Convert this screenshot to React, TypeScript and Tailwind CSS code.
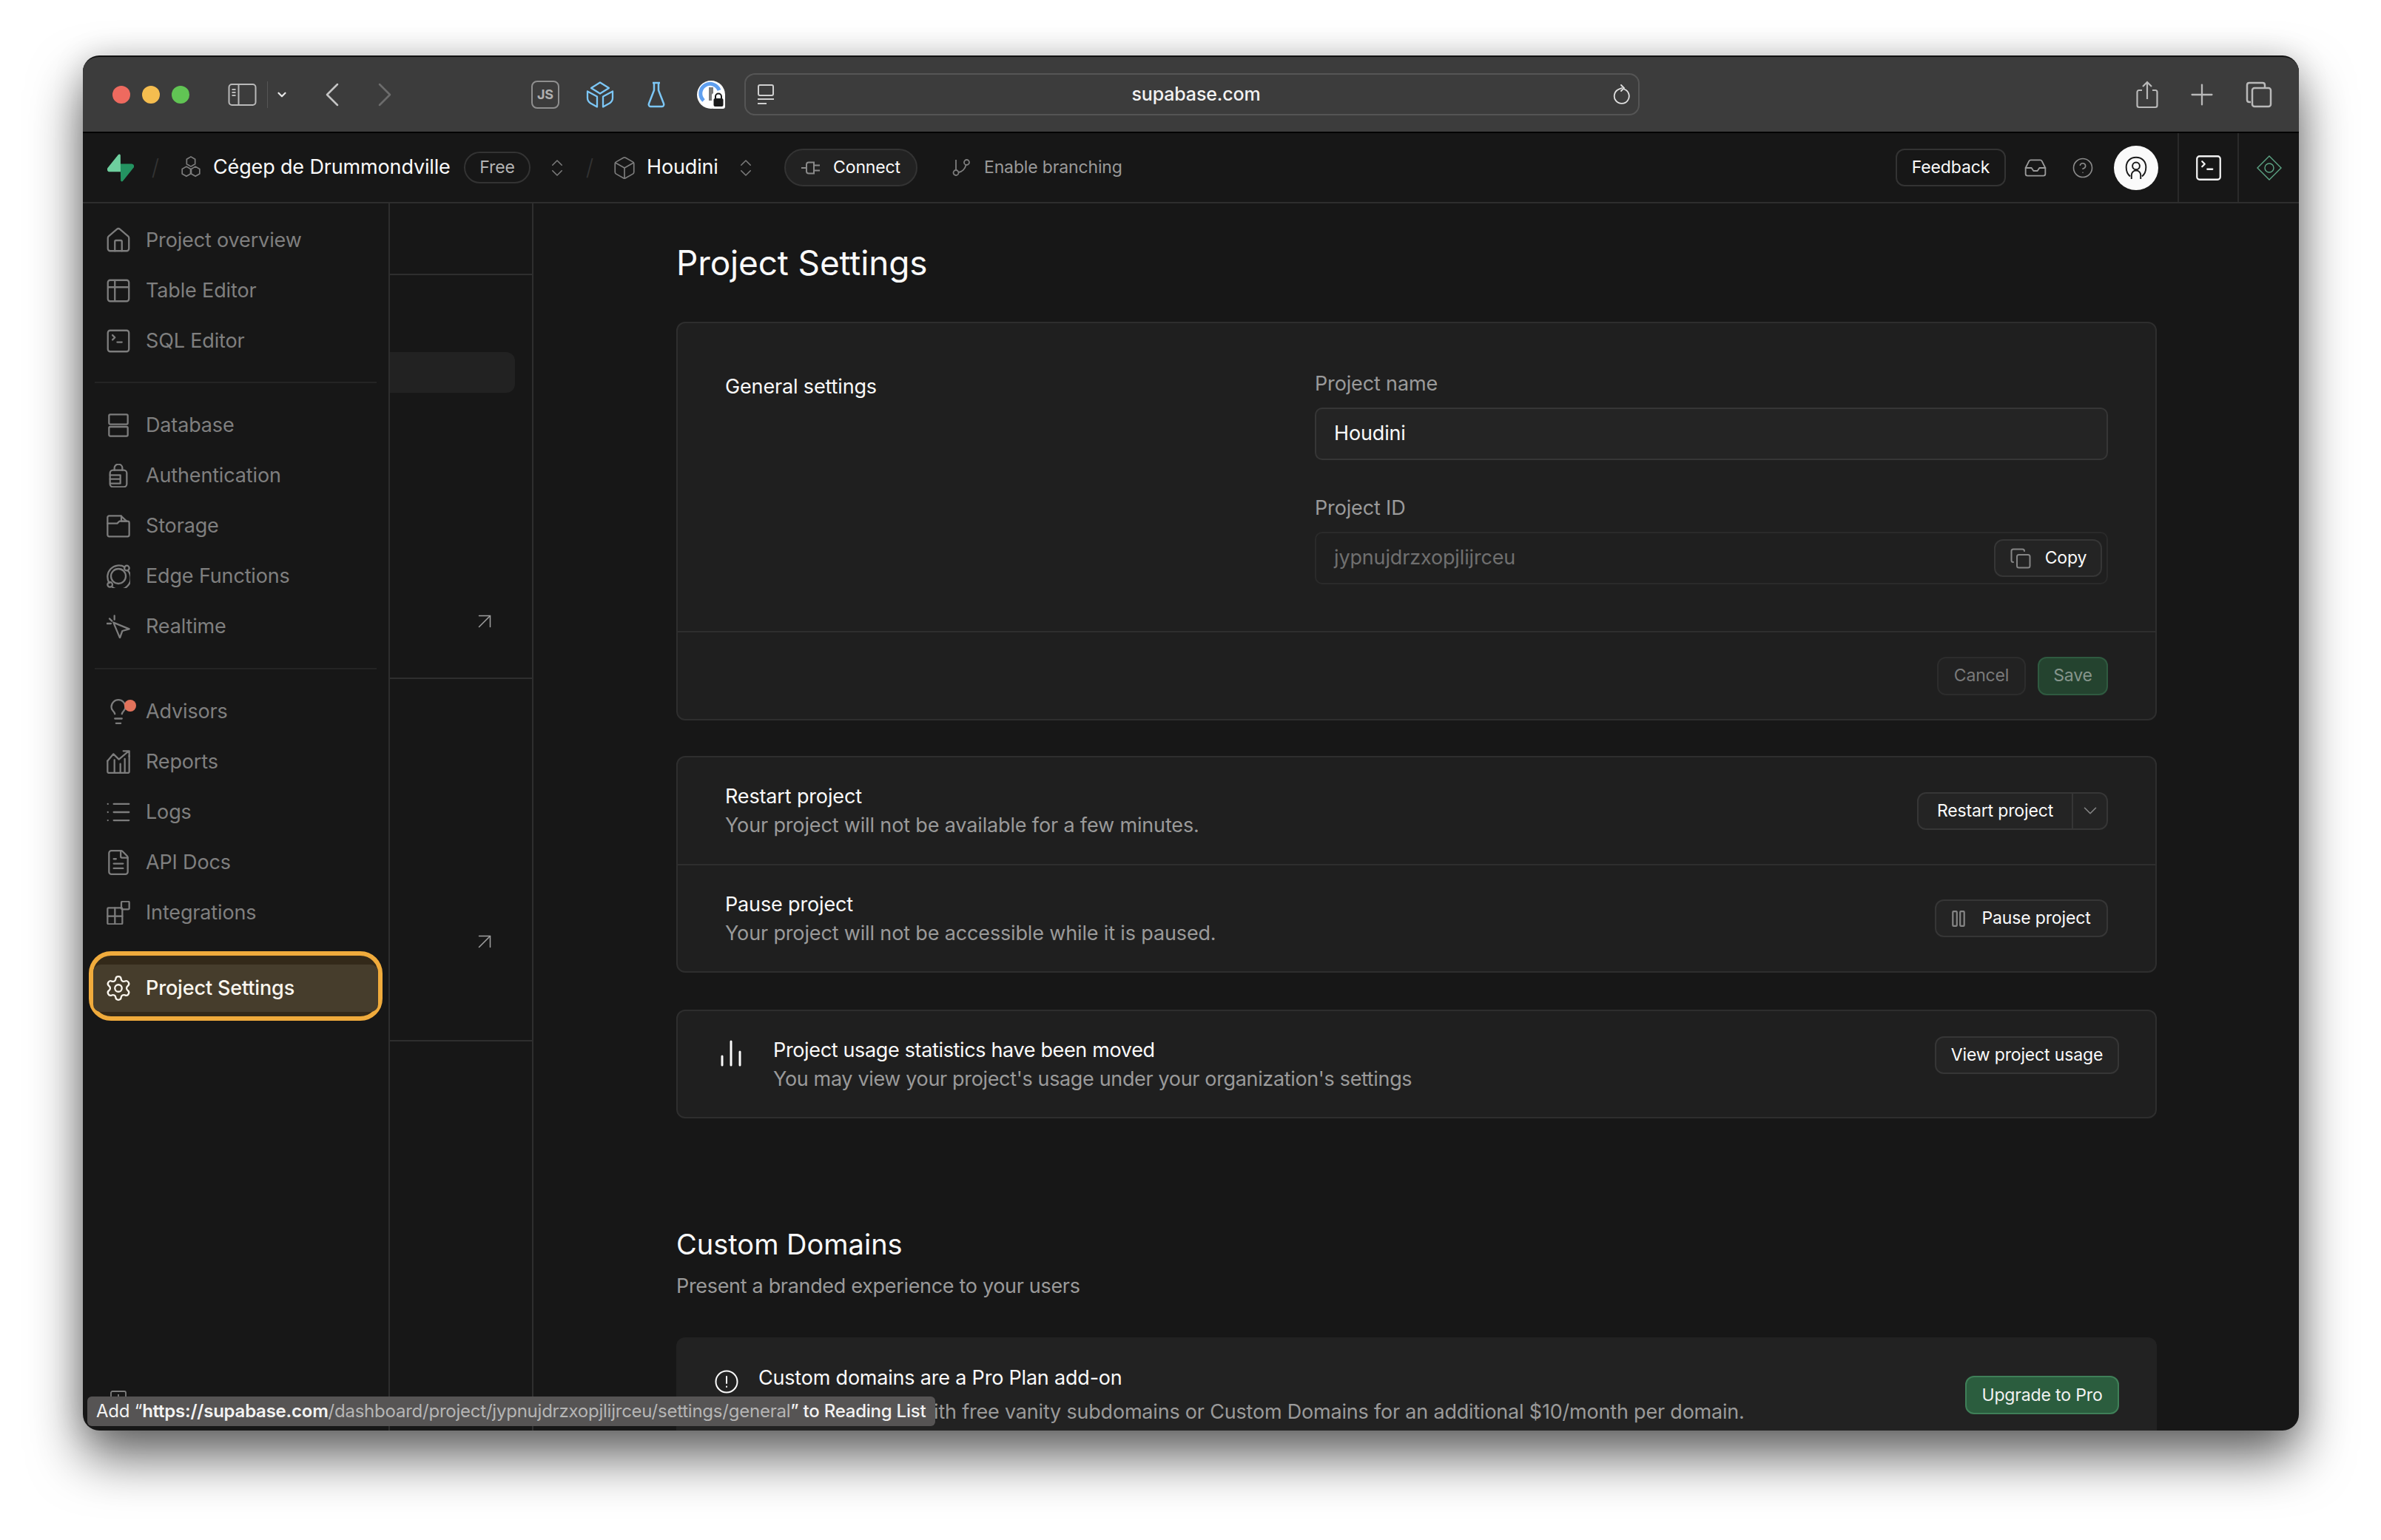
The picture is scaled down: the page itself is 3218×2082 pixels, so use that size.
import React from "react";
import {
  ArrowUpRight,
  Box,
  ChevronDown,
  ChevronLeft,
  ChevronRight,
  ChevronsUpDown,
  Copy,
  FileText,
  HelpCircle,
  Home,
  Inbox,
  Lightbulb,
  List,
  Plus,
  Settings,
  SquareTerminal,
  Table2,
} from "lucide-react";

const navIcon = "size-[32px] shrink-0 text-[#7d7d7d]";
// lucide icons have padding in their viewBox, so they need a bigger box
const lucideNav = "mx-[-3px] size-[38px] shrink-0 text-[#7d7d7d]";

function Glyph({ children, className = navIcon }: any) {
  return (
    <svg
      viewBox="0 0 24 24"
      fill="none"
      stroke="currentColor"
      strokeWidth="1.7"
      strokeLinecap="round"
      strokeLinejoin="round"
      className={className}
    >
      {children}
    </svg>
  );
}

const DatabaseIcon = () => (
  <Glyph>
    <rect x="2.5" y="1" width="19" height="10" rx="1.2" />
    <rect x="2.5" y="13.5" width="19" height="9.5" rx="1.2" />
  </Glyph>
);
const AuthIcon = () => (
  <Glyph>
    <path d="M8 6.500V4a4 3.500 0 0 1 8 0v2.500" />
    <rect x="3.500" y="6.500" width="17" height="17" rx="3" />
    <path d="M3.500 11.500h10.500v8.500H4M3.500 15.500h10.500" />
  </Glyph>
);
const StorageIcon = () => (
  <Glyph>
    <path d="M1 9.500V3.500c0-.9.7-1.700 1.700-1.700h11.800l6 5.500" />
    <path d="M15 2v5.300h5.500" />
    <path d="M1 9.500h9.800l2.200-2.200h8.300c.9 0 1.700.8 1.700 1.700v12c0 1-.8 1.700-1.700 1.700H2.700c-1 0-1.700-.7-1.700-1.700z" />
  </Glyph>
);
const EdgeIcon = () => (
  <Glyph>
    <path d="M18.500 2.800A11.500 11.500 0 0 0 2.800 18.800" />
    <path d="M21.300 6a11.500 11.500 0 0 1-16 16.500" />
    <circle cx="12" cy="12" r="7.500" />
    <circle cx="20.500" cy="3.800" r="2.500" />
    <circle cx="3.500" cy="20.500" r="2.500" />
  </Glyph>
);
const RealtimeIcon = () => (
  <Glyph>
    <path d="M7 8l16 6.500-7 2-2.500 7z" />
    <path d="M5.500 6.500L3 4M8 5V1M4.500 9H.5" />
  </Glyph>
);
const ReportsIcon = () => (
  <Glyph>
    <path d="M1 11l6-7 5.500 5.500 9.500-8M17 1h6v5.500" />
    <path d="M1 11v11c0 .6.500 1.200 1.200 1.200h19.600c.6 0 1.200-.6 1.200-1.200V6" />
    <path d="M8 23V10M14 23V14M18.500 23V9" />
  </Glyph>
);
const IntegrationsIcon = () => (
  <Glyph>
    <rect x="1" y="7" width="15" height="16.500" rx="1" />
    <path d="M1 15.500h15M8.500 7v16.500" />
    <rect x="15" y=".5" width="8" height="8" rx="1.200" />
  </Glyph>
);

function AdvisorsIcon() {
  return (
    <span className="relative size-[32px] shrink-0">
      <Lightbulb className="mx-[-3px] size-[38px] mt-[-3px] text-[#7d7d7d]" strokeWidth={1.45} />
      <span className="absolute right-[-8px] top-0 size-[16px] rounded-full bg-[#e2725b]" />
    </span>
  );
}

function NavItem({ icon, label }: any) {
  return (
    <div className="flex h-[68px] items-center gap-[21px] pl-[32px] text-[27px] text-[#7f7f7f]">
      {icon}
      <span>{label}</span>
    </div>
  );
}

function Divider({ className = "" }: any) {
  return <div className={`mx-[16px] h-[2px] shrink-0 bg-[#242424] ${className}`} />;
}

function Sidebar() {
  return (
    <aside className="flex w-[415px] shrink-0 flex-col border-r-2 border-[#2e2e2e] pt-[16px]">
      <NavItem icon={<Home className={lucideNav} strokeWidth={1.45} />} label="Project overview" />
      <NavItem icon={<Table2 className={lucideNav} strokeWidth={1.45} />} label="Table Editor" />
      <NavItem icon={<SquareTerminal className={lucideNav} strokeWidth={1.45} />} label="SQL Editor" />
      <Divider className="mb-[23px] mt-[21px]" />
      <NavItem icon={<DatabaseIcon />} label="Database" />
      <NavItem icon={<AuthIcon />} label="Authentication" />
      <NavItem icon={<StorageIcon />} label="Storage" />
      <NavItem icon={<EdgeIcon />} label="Edge Functions" />
      <NavItem icon={<RealtimeIcon />} label="Realtime" />
      <Divider className="mb-[23px] mt-[22px]" />
      <NavItem icon={<AdvisorsIcon />} label="Advisors" />
      <NavItem icon={<ReportsIcon />} label="Reports" />
      <NavItem icon={<List className={lucideNav} strokeWidth={1.45} />} label="Logs" />
      <NavItem icon={<FileText className={lucideNav} strokeWidth={1.45} />} label="API Docs" />
      <NavItem icon={<IntegrationsIcon />} label="Integrations" />
      <div className="ml-[8px] mt-[18px] flex h-[94px] w-[397px] shrink-0 items-center rounded-[30px] border-[6px] border-[#f0ab3c] bg-[#332919] pt-[6px]">
        <div className="flex h-[64px] w-full items-center gap-[21px] rounded-[10px] bg-[#463d2c] pl-[18px] text-[27px] font-medium text-[#faf6ee]">
          <Settings className="mx-[-3px] size-[38px] shrink-0" strokeWidth={1.45} />
          <span>Project Settings</span>
        </div>
      </div>
      <svg viewBox="0 0 22 32" className="ml-[37px] mb-[22px] mt-auto h-[32px] w-[22px] text-[#7d7d7d]" fill="none" stroke="currentColor" strokeWidth="1.800">
        <rect x="1" y="1" width="20" height="30" rx="2" />
        <path d="M11 5v6" />
      </svg>
    </aside>
  );
}

function SubPanel() {
  const arrow = "ml-auto mr-[46px] size-[36px] text-[#a0a0a0]";
  return (
    <div className="flex w-[194px] shrink-0 flex-col border-r-2 border-[#2e2e2e]">
      <div className="h-[97px] shrink-0 border-b-2 border-[#2e2e2e]" />
      <div className="h-[546px] shrink-0 border-b-2 border-[#2e2e2e] pt-[104px]">
        <div className="mr-[23px] h-[55px] rounded-r-[12px] bg-[#222222]" />
        <div className="mt-[291px] flex">
          <ArrowUpRight className={arrow} strokeWidth={1} />
        </div>
      </div>
      <div className="h-[490px] shrink-0 border-b-2 border-[#2e2e2e] pt-[337px]">
        <div className="flex">
          <ArrowUpRight className={arrow} strokeWidth={1} />
        </div>
      </div>
    </div>
  );
}

function OutlineButton({ children, className = "" }: any) {
  return (
    <div
      className={`flex h-[51px] items-center justify-center rounded-[12px] border-2 border-[#363636] bg-[#242424] text-[23px] text-[#fafafa] ${className}`}
    >
      {children}
    </div>
  );
}

function GeneralCard() {
  return (
    <section className="rounded-[12px] border-2 border-[#2e2e2e] bg-[#1f1f1f]">
      <div className="flex h-[416px] pl-[64px] pr-[64px] pt-[64px]">
        <div className="w-[797px] pt-[4px] text-[27px] leading-[36px] text-[#fafafa]">General settings</div>
        <div className="flex-1">
          <div className="text-[27px] leading-[36px] text-[#9a9a9a]">Project name</div>
          <div className="mt-[14px] flex h-[71px] items-center rounded-[10px] border-2 border-[#363636] bg-[#242424] pl-[24px] text-[27px] text-[#fafafa]">
            Houdini
          </div>
          <div className="mt-[47px] text-[27px] leading-[36px] text-[#9a9a9a]">Project ID</div>
          <div className="mt-[14px] flex h-[71px] items-center justify-between rounded-[10px] border-2 border-[#2a2a2a] bg-[#1f1f1f] pl-[24px] pr-[6px] text-[27px] text-[#6f6f6f]">
            <span>jypnujdrzxopjlijrceu</span>
            <OutlineButton className="w-[146px] gap-[18px]">
              <Copy className="size-[30px] text-[#858585]" strokeWidth={1.6} />
              Copy
            </OutlineButton>
          </div>
        </div>
      </div>
      <div className="flex h-[119px] items-center justify-end gap-[16px] border-t-2 border-[#2e2e2e] pr-[64px]">
        <div className="flex h-[52px] w-[120px] items-center justify-center rounded-[12px] border-2 border-[#2c2c2c] bg-[#222222] text-[23px] text-[#7a7a7a]">
          Cancel
        </div>
        <div className="flex h-[52px] w-[95px] items-center justify-center rounded-[12px] border-2 border-[#2f5a40] bg-[#24432f] text-[23px] text-[#86958c]">
          Save
        </div>
      </div>
    </section>
  );
}

function ActionRow({ title, desc, children, className = "" }: any) {
  return (
    <div className={`flex items-center justify-between pl-[64px] pr-[64px] ${className}`}>
      <div className="text-[27px] leading-[39px]">
        <div className="text-[#fafafa]">{title}</div>
        <div className="text-[#9a9a9a]">{desc}</div>
      </div>
      {children}
    </div>
  );
}

function ProjectActions() {
  return (
    <section className="mt-[48px] rounded-[12px] border-2 border-[#2e2e2e] bg-[#1f1f1f]">
      <ActionRow title="Restart project" desc="Your project will not be available for a few minutes." className="h-[144px]">
        <div className="flex h-[51px] w-[258px] rounded-[12px] border-2 border-[#363636] bg-[#242424] text-[23px] text-[#fafafa]">
          <div className="flex flex-1 items-center justify-center border-r-2 border-[#363636]">Restart project</div>
          <div className="flex w-[45px] items-center justify-center">
            <ChevronDown className="size-[30px] text-[#858585]" strokeWidth={1.3} />
          </div>
        </div>
      </ActionRow>
      <ActionRow
        title="Pause project"
        desc="Your project will not be accessible while it is paused."
        className="h-[145px] border-t-2 border-[#2e2e2e]"
      >
        <OutlineButton className="w-[234px] gap-[22px]">
          <svg viewBox="0 0 16 20" className="h-[22px] w-[18px] text-[#858585]" fill="none" stroke="currentColor" strokeWidth="2">
            <rect x="1" y="1" width="5" height="18" rx="1" />
            <rect x="10" y="1" width="5" height="18" rx="1" />
          </svg>
          Pause project
        </OutlineButton>
      </ActionRow>
    </section>
  );
}

function UsageCard() {
  return (
    <section className="mt-[50px] flex h-[147px] items-center rounded-[12px] border-2 border-[#2e2e2e] bg-[#1f1f1f] pl-[58px] pr-[49px]">
      <svg viewBox="0 0 28 36" className="mb-[30px] h-[36px] w-[28px] shrink-0 text-[#fafafa]" fill="none" stroke="currentColor" strokeWidth="3" strokeLinecap="round">
        <path d="M2 34V22M14 34V2M26 34V16" />
      </svg>
      <div className="ml-[43px] text-[27px] leading-[39px] tracking-[-0.35px]">
        <div className="text-[#fafafa]">Project usage statistics have been moved</div>
        <div className="text-[#9a9a9a]">You may view your project's usage under your organization's settings</div>
      </div>
      <OutlineButton className="mt-[34px] ml-auto w-[249px] self-start">View project usage</OutlineButton>
    </section>
  );
}

function CustomDomains() {
  return (
    <div>
      <h2 className="mt-[142px] text-[38px] leading-[56px] tracking-normal text-[#fafafa]">Custom Domains</h2>
      <p className="mt-[11px] text-[27px] leading-[36px] tracking-[-0.32px] text-[#9a9a9a]">Present a branded experience to your users</p>
      <section className="mt-[51px] flex h-[200px] justify-between rounded-[12px] bg-[#222222] pl-[52px] pr-[51px] pt-[32px]">
        <div className="flex">
          <svg viewBox="0 0 32 32" className="mt-[12px] size-[32px] shrink-0 text-[#fafafa]" fill="none" stroke="currentColor" strokeWidth="2" strokeLinecap="round">
            <circle cx="16" cy="16" r="14.500" />
            <path d="M16 9v9M16 22.500v.5" />
          </svg>
          <div className="ml-[27px] text-[27px] leading-[46px] tracking-[-0.2px]">
            <div className="text-[#fafafa]">Custom domains are a Pro Plan add-on</div>
            <div className="text-[#9a9a9a]">Paid Plans come with free vanity subdomains or Custom Domains for an additional $10/month per domain.</div>
          </div>
        </div>
        <div className="mt-[20px] flex h-[52px] w-[208px] items-center justify-center rounded-[12px] border-2 border-[#3f7f58] bg-[#2b5d3e] text-[23px] text-[#f2f2f2]">
          Upgrade to Pro
        </div>
      </section>
    </div>
  );
}

function SafariBar() {
  const ctrl = "shrink-0 text-[#b9b9b9]";
  return (
    <div className="flex h-[103px] shrink-0 items-center border-b-2 border-black bg-[#3c3c3c] pl-[40px]">
      <span className="size-[24px] shrink-0 rounded-full bg-[#ee6a5f]" />
      <span className="ml-[16px] size-[24px] shrink-0 rounded-full bg-[#f5bd4f]" />
      <span className="ml-[16px] size-[24px] shrink-0 rounded-full bg-[#61c454]" />
      <svg viewBox="0 0 38 30" className={`ml-[52px] h-[30px] w-[39px] ${ctrl}`} fill="none" stroke="currentColor" strokeWidth="2">
        <rect x="1" y="1" width="36" height="28" rx="4" />
        <path d="M14 1v28M5 8h5M5 12h5M5 16h5" />
      </svg>
      <span className="ml-[14px] h-[36px] w-px shrink-0 bg-[#555555]" />
      <ChevronDown className="ml-[10px] size-[18px] shrink-0 text-[#e6e6e6]" strokeWidth={3} />
      <ChevronLeft className="ml-[31px] size-[56px] shrink-0 text-[#c4c4c4]" strokeWidth={1.1} />
      <ChevronRight className="ml-[15px] size-[56px] shrink-0 text-[#6c6c6c]" strokeWidth={1.1} />
      <div className="ml-[170px] flex size-[38px] shrink-0 items-center justify-center rounded-[8px] border-2 border-[#8f8f8f] text-[18px] font-bold text-[#b0b0b0]">
        JS
      </div>
      <svg viewBox="0 0 38 38" className="ml-[36px] size-[38px] shrink-0 text-[#7cc6f5]" fill="none" stroke="currentColor" strokeWidth="2.300" strokeLinejoin="round">
        <path d="M19 2.500l12 7.500-12 7.500-12-7.500z" />
        <path d="M2 14.500l13 7v14l-9-5q-4-3-4-7z" />
        <path d="M36 14.500l-13 7v14l9-5q4-3 4-7z" />
      </svg>
      <svg viewBox="0 0 26 36" className="ml-[44px] h-[36px] w-[26px] shrink-0 text-[#7cc6f5]" fill="none" stroke="currentColor" strokeWidth="2.500" strokeLinejoin="round">
        <path d="M8 2h10M10 2v10L3 30c-.8 2 .5 4 2 4h16c1.500 0 2.800-2 2-4l-7-18V2" />
      </svg>
      <svg viewBox="0 0 38 38" className="ml-[42px] size-[38px] shrink-0">
        <circle cx="19" cy="19" r="19" fill="#ffffff" />
        <path d="M9 27A13 13 0 1 1 30 13" fill="none" stroke="#5f9fef" strokeWidth="5" />
        <rect x="16" y="9" width="6" height="18" fill="#7a7a7a" />
        <rect x="20" y="17" width="18" height="21" rx="3" fill="#ffffff" />
        <path d="M25 24v-2.500a4 4 0 0 1 8 0V24" fill="none" stroke="#1a1a1a" strokeWidth="2" />
        <rect x="22.500" y="24" width="13" height="11" rx="2" fill="#1a1a1a" />
      </svg>
      <div className="ml-[26px] flex h-[57px] w-[1210px] shrink-0 items-center rounded-[14px] border-2 border-[#555555] pl-[15px] pr-[10px]">
        <svg viewBox="0 0 24 28" className="h-[28px] w-[24px] text-[#cfcfcf]" fill="none" stroke="currentColor" strokeWidth="2">
          <rect x="2" y="1" width="20" height="14" rx="2" />
          <path d="M1 20h22M1 26h12" />
        </svg>
        <span className="flex-1 pl-[6px] text-center text-[25px] font-medium text-[#f2f2f2]">supabase.com</span>
        <svg viewBox="0 0 24 28" className="h-[28px] w-[24px] text-[#e0e0e0]" fill="none" stroke="currentColor" strokeWidth="1.800" strokeLinecap="round">
          <path d="M15 6.500a10 10 0 1 1-7 .2L12 5" />
          <path d="M11 1l4 4-4 4" />
        </svg>
      </div>
      <svg viewBox="0 0 30 38" className={`ml-[671px] h-[38px] w-[30px] ${ctrl}`} fill="none" stroke="currentColor" strokeWidth="2.200">
        <path d="M8 13H4c-1.500 0-2.500 1-2.500 2.500v18c0 1.500 1 2.500 2.500 2.500h22c1.500 0 2.500-1 2.500-2.500v-18c0-1.500-1-2.500-2.500-2.500h-4M15 25V2M9 8l6-6 6 6" />
      </svg>
      <Plus className={`ml-[36px] size-[46px] ${ctrl}`} strokeWidth={1.2} />
      <svg viewBox="0 0 36 36" className={`ml-[36px] size-[36px] ${ctrl}`} fill="none" stroke="currentColor" strokeWidth="2.500">
        <path d="M7 28H5c-2 0-3-1-3-3V5c0-2 1-3 3-3h18c2 0 3 1 3 3v3" />
        <rect x="9" y="9" width="25" height="25" rx="3" />
      </svg>
    </div>
  );
}

function AppHeader() {
  const updown = "size-[30px] shrink-0 text-[#7d7d7d]";
  const slash = <span className="block w-[12px] text-center text-[30px] font-light text-[#333333]">/</span>;
  return (
    <header className="flex h-[95px] shrink-0 items-center border-b-2 border-[#2e2e2e] bg-[#171717] pl-[33px]">
      <svg viewBox="0 0 109 113" className="h-[38px] w-[36px] shrink-0">
        <path d="M63.700 110.300c-2.900 3.600-8.700 1.600-8.800-3l-1-67.300h45.800c8.300 0 12.900 9.600 7.700 16z" fill="#249361" />
        <path d="M45.300 2.100c2.900-3.600 8.700-1.600 8.800 3l.4 67.300H9.200c-8.300 0-12.900-9.600-7.700-16z" fill="#6ecf9e" />
      </svg>
      <span className="ml-[23px]">{slash}</span>
      <svg viewBox="0 0 27 36" className="ml-[29px] h-[34px] w-[26px] shrink-0 text-[#7d7d7d]" fill="none" stroke="currentColor" strokeWidth="1.800" strokeLinejoin="round">
        <path d="M13.500 2l6 3.500v7l-6 3.500-6-3.500v-7zM7 16l6 3.500v7L7 30l-6-3.500v-7zM20 16l6 3.500v7L20 30l-6-3.500v-7z" />
      </svg>
      <span className="ml-[17px] w-[322px] shrink-0 whitespace-nowrap text-[27px] text-[#fafafa]">Cégep de Drummondville</span>
      <div className="ml-[17px] flex h-[43px] w-[90px] shrink-0 items-center justify-center rounded-full border-2 border-[#333333] text-[23px] text-[#b3b3b3]">
        Free
      </div>
      <ChevronsUpDown className={`ml-[21px] ${updown}`} strokeWidth={1.2} />
      <span className="ml-[23px]">{slash}</span>
      <Box className="ml-[24px] size-[34px] shrink-0 text-[#7d7d7d]" strokeWidth={1.2} />
      <span className="ml-[13px] w-[97px] shrink-0 text-[27px] text-[#fafafa]">Houdini</span>
      <ChevronsUpDown className={`ml-[22px] ${updown}`} strokeWidth={1.2} />
      <div className="ml-[37px] flex h-[51px] w-[180px] shrink-0 items-center justify-center gap-[17px] rounded-full border-2 border-[#333333] bg-[#222222] text-[23px] text-[#fafafa]">
        <svg viewBox="0 0 26 18" className="h-[18px] w-[26px] text-[#8a8a8a]" fill="none" stroke="currentColor" strokeWidth="2">
          <path d="M0 9h7M17 1.500h-7a3 3 0 0 0-3 3v9a3 3 0 0 0 3 3h7zM17 5.500h8M17 12.500h8" />
        </svg>
        Connect
      </div>
      <svg viewBox="0 0 24 23" className="ml-[47px] h-[23px] w-[24px] shrink-0 text-[#7d7d7d]" fill="none" stroke="currentColor" strokeWidth="1.800">
        <path d="M5 1v13.500" />
        <circle cx="5" cy="18.500" r="3.500" />
        <circle cx="19.500" cy="4.500" r="3.500" />
        <path d="M18.500 8c-1 5-5 9-10 10" />
      </svg>
      <span className="ml-[19px] whitespace-nowrap text-[23px] text-[#9a9a9a]">Enable branching</span>
      <div className="ml-auto flex h-[51px] w-[149px] shrink-0 items-center justify-center rounded-[12px] border-2 border-[#333333] text-[23px] text-[#fafafa]">
        Feedback
      </div>
      <Inbox className="ml-[24px] size-[32px] shrink-0 text-[#9a9a9a]" strokeWidth={1.4} />
      <HelpCircle className="ml-[33px] size-[30px] shrink-0 text-[#8a8a8a]" strokeWidth={1.3} />
      <div className="ml-[27px] flex size-[60px] shrink-0 items-center justify-center rounded-full bg-[#fafafa]">
        <svg viewBox="0 0 32 36" className="h-[32px] w-[30px] text-[#1a1a1a]" fill="none" stroke="currentColor" strokeWidth="2.200">
          <path d="M7 31C2 27 1 22 1 17 1 8 7 2 16 2s15 6 15 15c0 5-1 10-6 14" />
          <circle cx="16" cy="15" r="5.500" />
          <path d="M9 35v-6c0-4 3-7 7-7s7 3 7 7v6" />
        </svg>
      </div>
      <div className="ml-[26px] flex h-full w-[83px] shrink-0 items-center justify-center border-x-2 border-[#2a2a2a]">
        <SquareTerminal className="size-[42px] text-[#f2f2f2]" strokeWidth={1.3} />
      </div>
      <div className="flex h-full w-[81px] shrink-0 items-center justify-center">
        <svg viewBox="0 0 34 34" className="size-[34px] text-[#5da585]" fill="none" stroke="currentColor" strokeWidth="1.400">
          <path d="M17 1l16 16-16 16L1 17z" />
          <circle cx="17" cy="17" r="6" />
        </svg>
      </div>
    </header>
  );
}

function ReadingListTip() {
  return (
    <div className="absolute bottom-[6px] left-[6px] flex h-[40px] w-[1146px] items-center whitespace-nowrap rounded-[6px] bg-[#565454] pl-[12px] text-[24px] tracking-[-0.23px] text-[#f2f2f2]">
      <span>Add “</span>
      <span className="font-semibold">https://supabase.com</span>
      <span className="text-[#b5b5b5]">/dashboard/project/jypnujdrzxopjlijrceu/settings/general</span>
      <span className="font-medium">” to Reading List</span>
    </div>
  );
}

export default function App() {
  return (
    <div className="h-[2082px] w-[3218px] overflow-hidden bg-white pl-[112px] pt-[75px] font-[Inter] tracking-[-0.15px]">
      <div className="relative flex h-[1859px] w-[2995px] flex-col overflow-hidden rounded-[22px] border-t-2 border-[#111111] bg-[#171717] shadow-[0_36px_70px_rgba(0,0,0,0.6),0_0_40px_rgba(0,0,0,0.15)]">
        <SafariBar />
        <AppHeader />
        <div className="flex min-h-0 flex-1">
          <Sidebar />
          <SubPanel />
          <main className="min-w-0 flex-1 overflow-hidden pl-[193px] pr-[192px]">
            <div className="flex h-[160px] items-center text-[46px] text-[#fafafa]">Project Settings</div>
            <GeneralCard />
            <ProjectActions />
            <UsageCard />
            <CustomDomains />
          </main>
        </div>
        <ReadingListTip />
      </div>
    </div>
  );
}
